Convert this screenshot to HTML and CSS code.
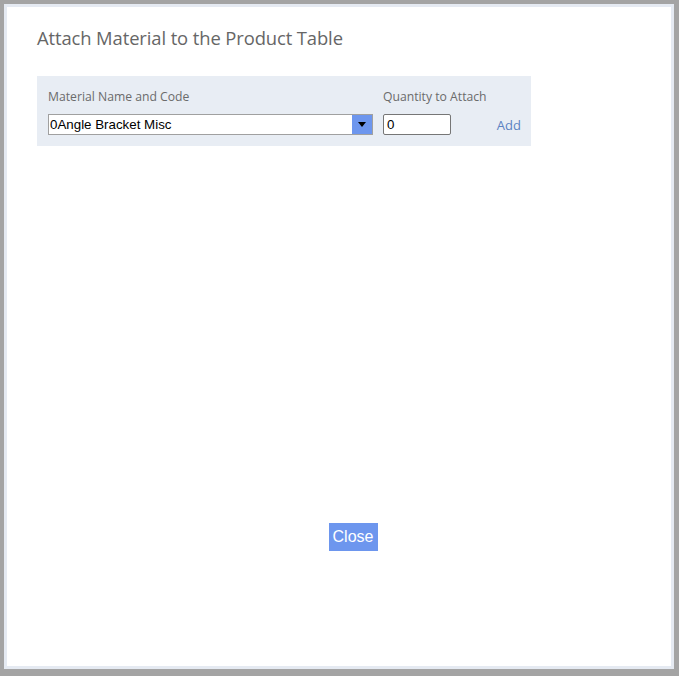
FILE: index.html
```html
<!DOCTYPE html>
<html>
<head>
<meta charset="utf-8">
<link rel="stylesheet" href="styles.css">
</head>
<body>
<div class="dialog">
  <div class="content">
    <h1 class="title">Attach Material to the Product Table</h1>
    <div class="panel">
      <div class="field field-material">
        <label class="label">Material Name and Code</label>
        <div class="select">
          <span class="select-text">0Angle Bracket Misc</span>
          <span class="select-btn"><span class="tri"></span></span>
        </div>
      </div>
      <div class="field field-qty">
        <label class="label">Quantity to Attach</label>
        <div class="qty">0</div>
      </div>
      <a class="add">Add</a>
    </div>
    <div class="actions">
      <button class="close">Close</button>
    </div>
  </div>
</div>
</body>
</html>
```
FILE: styles.css
```css
html, body {
  margin: 0;
  padding: 0;
}
body {
  background: #a4a4a4;
  width: 679px;
  height: 676px;
  overflow: hidden;
  font-family: "Open Sans", "Noto Sans", sans-serif;
}
.dialog {
  box-sizing: border-box;
  margin: 4px 0 0 4px;
  width: 670px;
  height: 665px;
  border: 3px solid #e5eaf2;
  background: #ffffff;
}
.content {
  padding: 0 2px 0 30px;
  display: flex;
  flex-direction: column;
}
.title {
  margin: 0;
  padding-top: 18px;
  font-weight: normal;
  font-size: 18.4px;
  line-height: 26px;
  color: #666666;
  letter-spacing: -0.1px;
}
.panel {
  margin-top: 25px;
  width: 494px;
  height: 70px;
  box-sizing: border-box;
  background: #e8edf4;
  padding: 0 10px 0 11px;
  display: flex;
  align-items: flex-start;
}
.field {
  display: flex;
  flex-direction: column;
}
.label {
  font-size: 12.2px;
  line-height: 16px;
  color: #6b6b6b;
  margin-top: 13px;
  height: 25px;
}
.select {
  width: 325px;
  height: 21px;
  box-sizing: border-box;
  border: 1px solid #a0a0a0;
  background: #fff;
  display: flex;
  align-items: stretch;
}
.select-text {
  flex: 1;
  font-family: "Liberation Sans", Arial, sans-serif;
  font-size: 13.33px;
  line-height: 19px;
  padding-left: 1px;
  color: #000;
}
.select-btn {
  width: 20px;
  background: #6d96ee;
  display: flex;
  align-items: center;
  justify-content: center;
}
.tri {
  width: 0;
  height: 0;
  border-left: 4px solid transparent;
  border-right: 4px solid transparent;
  border-top: 5px solid #000;
}
.field-qty {
  margin-left: 10px;
}
.qty {
  width: 68px;
  height: 21px;
  box-sizing: border-box;
  border: 1px solid #767676;
  border-radius: 2px;
  background: #fff;
  font-family: "Liberation Sans", Arial, sans-serif;
  font-size: 13.33px;
  line-height: 19px;
  padding-left: 3px;
  color: #000;
}
.add {
  margin-left: auto;
  margin-top: 40px;
  font-size: 13px;
  line-height: 18px;
  color: #5b82c2;
  cursor: pointer;
}
.actions {
  display: flex;
  justify-content: center;
  margin-top: 377px;
}
.close {
  width: 49px;
  height: 28px;
  border: none;
  background: #6d96ee;
  color: #fff;
  font-family: "Liberation Sans", Arial, sans-serif;
  font-size: 16px;
  padding: 0;
  margin: 0;
}
```
